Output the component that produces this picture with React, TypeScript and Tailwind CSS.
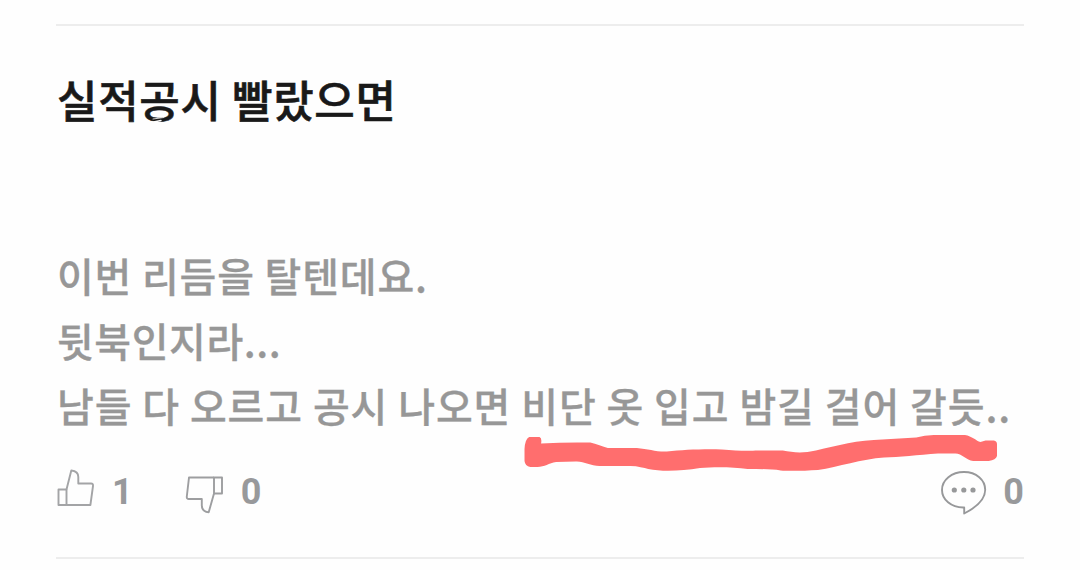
import React from 'react';

const bodyLines = [
  { text: '이번 리듬을 탈텐데요.', tracking: 'tracking-[0.8px]' },
  { text: '뒷북인지라...', tracking: 'tracking-[0.55px]' },
  { text: '남들 다 오르고 공시 나오면 비단 옷 입고 밤길 걸어 갈듯..', tracking: 'tracking-[0.9px]' },
];

function ThumbUpIcon() {
  return (
    <svg width="40" height="40" viewBox="0 0 40 40" fill="none" stroke="#a3a4a6" strokeWidth="1.9" strokeLinejoin="round">
      <path d="M2.5 20.5H10.5V36H2.5Z" />
      <path d="M10.5 20.5L15.3 1.5C20 2 22.3 4.5 22.3 8V14.5H35C36.6 14.5 37.3 15.3 37 17L34.4 36H10.5" />
    </svg>
  );
}

function ThumbDownIcon() {
  return (
    <svg width="40" height="40" viewBox="0 0 40 40" fill="none" stroke="#9d9ea0" strokeWidth="1.9" strokeLinejoin="round">
      <path d="M29 2.5H37V18.5H29Z" />
      <path d="M29 2.5H4L1.8 21.5C1.6 23.3 2.4 24 3.8 24H16.8V30.5C16.8 34.5 19 36.8 23.7 37.3L29 18.5" />
    </svg>
  );
}

function CommentIcon() {
  return (
    <svg width="48" height="46" viewBox="0 0 48 46" fill="none" stroke="#97989a" strokeWidth="1.9" strokeLinejoin="round">
      <path d="M23.3 37.5C11 37.2 2 29.5 2 19.9C2 9.9 11.7 2 24 2C36.3 2 45.2 10 45.2 19.8C45.2 30 36 37.5 24.2 43.5V37.5Z" />
      <g fill="#97989a" stroke="none">
        <circle cx="14.3" cy="20" r="2.6" />
        <circle cx="23.8" cy="20" r="2.6" />
        <circle cx="33" cy="20" r="2.6" />
      </g>
    </svg>
  );
}

function MarkerStroke() {
  return (
    <svg className="absolute left-[468px] top-[408px]" width="474" height="38" viewBox="524 434 474 38">
      <path
        fill="#ff6e6e"
        d="M529 437H539Q541.5 438 540.500 443.500Q564 442 588 442.500C594 443.500 600 447 605 448H633C644 449 652 452 662 451.500C678 450 694 449 715 449.500C730 451 742 451 750 450.500H774C782 452 788 453 798 452C820 448 838 441 862 440L903 437.500Q911 435 920 435H950C957 436 961 441 965 442L970 440.500H978Q981 441 981 444V456Q980 460 973 461H958C951 460 947 453 940 453.500H924C905 455 886 457 872 457.500C850 459 828 467 808 470C794 471 778 471 772 470.500C764 469 752 469 740 469C726 467 708 467 694 468C676 471 658 472 644 469C640 468 634 466 627 466H597C588 466 582 461 574 461.500L555 462C548 463 544 467 537 467H530Q525 466 524.500 461V449Q525 439 529 437Z"
        transform="translate(524 0) scale(1.035 1) translate(-524 0)"
      />
    </svg>
  );
}

// Eraser scuff left under the title
function EraserScuff() {
  return (
    <svg className="absolute left-[90px] top-[90px]" width="40" height="10" viewBox="0 0 40 10" fill="none" stroke="#fefefe" strokeLinecap="round">
      <path d="M5 6.500L15 4.500" strokeWidth="1.4" />
      <path d="M7 3L18 1.500" strokeWidth="0.8" />
    </svg>
  );
}

export default function App() {
  return (
    <div className="flex h-[570px] flex-col overflow-hidden bg-[#fefefe] px-14 pt-6 font-['Noto_Sans_CJK_KR',sans-serif]">
      <article className="relative h-[535px] border-t-2 border-b-2 border-[#ededed]">
        <h1 className="mt-[41px] h-16 pl-px text-[44px] leading-[64px] font-medium tracking-[0.65px] whitespace-pre text-[#191919] [-webkit-text-stroke:0.6px_#191919]">
          실적공시 빨랐으면
        </h1>
        <EraserScuff />

        <div className="mt-[112px] pl-px text-[40px] leading-[65px] font-medium text-[#979797] [-webkit-text-stroke:0.3px_#979797]">
          {bodyLines.map((line) => (
            <p key={line.text} className={`whitespace-pre ${line.tracking}`}>
              {line.text}
            </p>
          ))}
        </div>

        <MarkerStroke />

        {/* Reactions and comment count */}
        <footer className="mt-[31px] flex h-12 items-start font-['Roboto',sans-serif] text-[36px] leading-[46px] font-bold text-[#98999b]">
          <ThumbUpIcon />
          <span className="ml-4">1</span>
          <div className="ml-[52px] pt-1.5">
            <ThumbDownIcon />
          </div>
          <span className="ml-4">0</span>
          <div className="ml-auto pt-px">
            <CommentIcon />
          </div>
          <span className="ml-[15px]">0</span>
        </footer>
      </article>
    </div>
  );
}
